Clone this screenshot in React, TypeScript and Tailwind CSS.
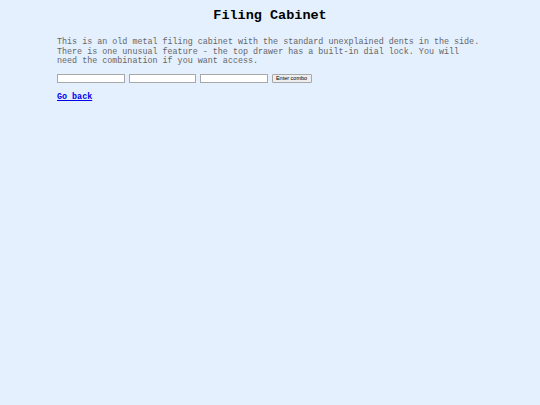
export default function App() {
  return (
    <div className="min-h-[405px] w-full bg-[#e4f0fe] font-['Liberation_Mono',monospace]">
      <h1 className="pt-[8px] text-center text-[13.5px] font-bold leading-[16px] text-black">Filing Cabinet</h1>
      <div className="px-[57px] pt-[14px]">
        <p className="text-[8.4px] leading-[9.6px] text-[#666]">
          This is an old metal filing cabinet with the standard unexplained dents in the side.
          <br />
          There is one unusual feature - the top drawer has a built-in dial lock. You will
          <br />
          need the combination if you want access.
        </p>
        <form className="mt-[7px] flex items-center gap-[4px]" onSubmit={e => e.preventDefault()}>
          <input className="h-[9px] w-[67.5px] border border-[#a8a8a8] bg-white" />
          <input className="h-[9px] w-[67.5px] border border-[#a8a8a8] bg-white" />
          <input className="h-[9px] w-[67.5px] border border-[#a8a8a8] bg-white" />
          <button className="h-[9px] w-[40px] rounded-[1px] border border-[#a8a8a8] bg-[#eee] font-['Liberation_Sans',sans-serif] text-[5.5px] leading-[7px] text-black">
            Enter combo
          </button>
        </form>
        <a href="#" className="mt-[9px] inline-block text-[8.4px] font-bold leading-[10px] text-[#0000ee] underline">
          Go back
        </a>
      </div>
    </div>
  );
}
